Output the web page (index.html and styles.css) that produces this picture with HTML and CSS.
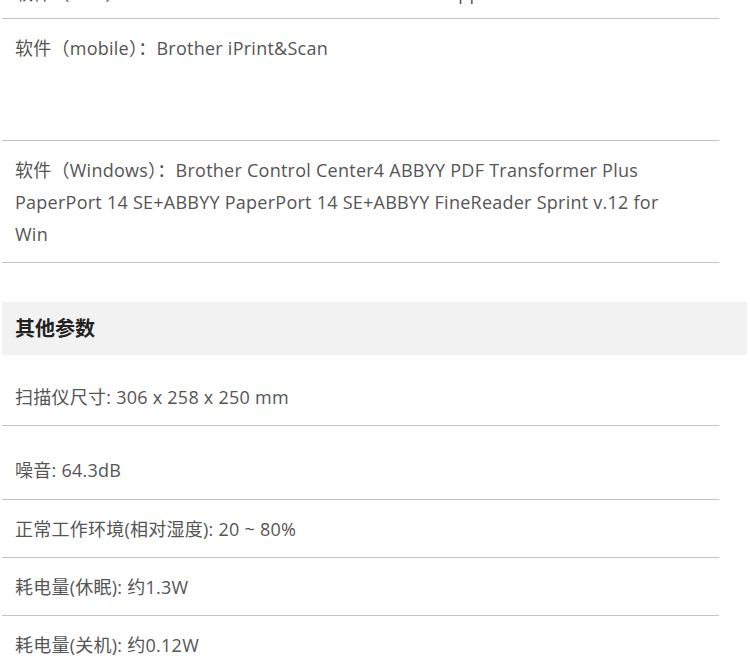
FILE: index.html
```html
<!DOCTYPE html>
<html lang="zh-CN">
<head>
<meta charset="utf-8">
<title>参数</title>
<link rel="stylesheet" href="styles.css">
</head>
<body>
<div class="page">
  <ul class="spec-list spec-list--top">
    <li class="row row--first">软件（Mac）：Brother iPrint&amp;Scan ControlCenter2 Apple</li>
    <li class="row row--tall">软件（mobile）：Brother iPrint&amp;Scan</li>
    <li class="row">软件（Windows）：Brother Control Center4 ABBYY PDF Transformer Plus PaperPort 14 SE+ABBYY PaperPort 14 SE+ABBYY FineReader Sprint v.12 for Win</li>
  </ul>
  <h2 class="section-title">其他参数</h2>
  <ul class="spec-list">
    <li class="row">扫描仪尺寸: 306 x 258 x 250 mm</li>
    <li class="row row--spaced">噪音: 64.3dB</li>
    <li class="row">正常工作环境(相对湿度): 20 ~ 80%</li>
    <li class="row">耗电量(休眠): 约1.3W</li>
    <li class="row row--last">耗电量(关机): 约0.12W</li>
  </ul>
</div>
</body>
</html>
```

FILE: styles.css
```css
html, body {
  margin: 0;
  padding: 0;
  background: #fff;
}
body {
  font-family: "Open Sans", "Noto Sans CJK SC", sans-serif;
  color: #555;
  font-size: 18px;
  letter-spacing: 0.25px;
  overflow: hidden;
}
.page {
  padding-left: 2px;
  width: 745px;
}
.spec-list {
  list-style: none;
  margin: 0;
  padding: 0;
}
.spec-list--top {
  margin-top: -39px;
}
.row {
  margin-right: 28px;
  padding: 13px 30px 12px 13px;
  line-height: 32px;
  border-bottom: 1px solid #c4c4c4;
}
.row--first {
  padding-top: 16px;
  padding-bottom: 9px;
}
.row--tall {
  min-height: 96px;
}
.row--spaced {
  padding-top: 28px;
  padding-bottom: 13px;
}
.row--last {
  border-bottom: none;
}
.section-title {
  margin: 39px 0 13px 0;
  height: 53px;
  line-height: 53px;
  padding-left: 13px;
  background: #f2f2f2;
  font-size: 20px;
  font-weight: bold;
  color: #222;
  letter-spacing: 0;
}
```
